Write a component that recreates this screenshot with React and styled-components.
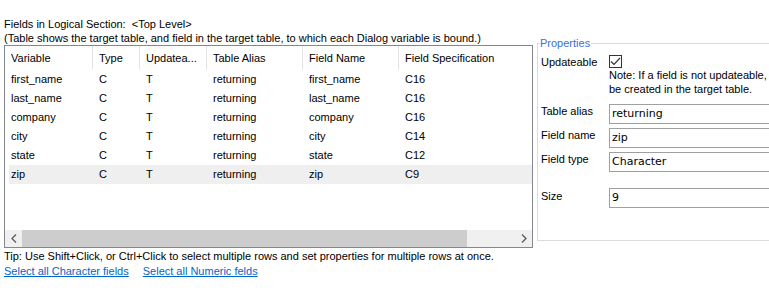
import styled, { createGlobalStyle } from "styled-components";

const GlobalStyle = createGlobalStyle`
  html, body {
    margin: 0;
    padding: 0;
    background: #ffffff;
    overflow: hidden;
  }
  body {
    font-family: "Liberation Sans", Arial, sans-serif;
    font-size: 11px;
    color: #000000;
  }
`;

const Page = styled.div`
  width: 769px;
  height: 292px;
  display: flex;
  overflow: hidden;
`;

const LeftPane = styled.div`
  width: 529px;
  padding: 17px 0 0 4px;
  flex: none;
`;

const Line = styled.div`
  line-height: 14px;
  white-space: nowrap;
`;

const TableBox = styled.div`
  width: 527px;
  height: 201px;
  border: 1px solid #828790;
  display: flex;
  flex-direction: column;
  overflow: hidden;
`;

const Grid = styled.div`
  flex: 1;
  overflow: hidden;
`;

const HeaderRow = styled.div`
  display: grid;
  grid-template-columns: 88px 47px 67px 96px 96px 160px;
  height: 24px;
`;

const HeaderCell = styled.div`
  padding-left: 6px;
  line-height: 24px;
  border-right: 1px solid #e5e5e5;
  white-space: nowrap;
  overflow: hidden;
`;

const Row = styled.div`
  display: grid;
  grid-template-columns: 84px 47px 67px 96px 96px 160px;
  height: 19px;
  line-height: 19px;
  margin-left: 4px;
  background: ${(p) => (p.$selected ? "#efefef" : "transparent")};
`;

const Cell = styled.div`
  padding-left: ${(p) => (p.$first ? 2 : 6)}px;
  white-space: nowrap;
`;

const ScrollBar = styled.div`
  height: 17px;
  display: flex;
  background: #f0f0f0;
`;

const Arrow = styled.div`
  width: 17px;
  display: flex;
  align-items: center;
  justify-content: center;
`;

const Track = styled.div`
  flex: 1;
  display: flex;
`;

const Thumb = styled.div`
  width: 445px;
  background: #cdcdcd;
`;

const Tip = styled.div`
  margin-top: 1px;
  line-height: 14px;
  white-space: nowrap;
`;

const Links = styled.div`
  display: flex;
  gap: 14px;
  line-height: 16px;
`;

const Link = styled.a`
  color: #0066cc;
  text-decoration: underline;
  cursor: pointer;
`;

const RightPane = styled.div`
  flex: none;
  width: 260px;
  padding: 36px 0 0 4px;
`;

const Group = styled.fieldset`
  margin: 0;
  height: 205px;
  padding: 0 0 0 3px;
  border: 1px solid #dcdcdc;
  border-right: none;
  box-sizing: border-box;
`;

const Legend = styled.legend`
  padding: 0 1px 0 0;
  margin-left: -1px;
  color: #3c6fd6;
  line-height: 14px;
`;

const Form = styled.div`
  display: grid;
  grid-template-columns: 68px 1fr;
  row-gap: 4px;
  align-items: start;
  padding-top: 2px;
`;

const Label = styled.div`
  line-height: 14px;
  padding-top: ${(p) => p.$top || 0}px;
  white-space: nowrap;
`;

const CheckWrap = styled.div`
  display: flex;
  flex-direction: column;
  padding: 3px 0 4px;
`;

const Check = styled.div`
  width: 11px;
  height: 11px;
  border: 1px solid #333333;
  display: flex;
  align-items: center;
  justify-content: center;
`;

const Note = styled.div`
  line-height: 14px;
  white-space: nowrap;
`;

const Input = styled.div`
  height: 18px;
  border: 1px solid #a0a0a0;
  border-right: none;
  font-family: "DejaVu Sans", Tahoma, sans-serif;
  font-size: 11px;
  line-height: 18px;
  padding-left: 2px;
  margin-top: ${(p) => p.$top || 0}px;
`;

const columns = [
  "Variable",
  "Type",
  "Updatea...",
  "Table Alias",
  "Field Name",
  "Field Specification",
];

const rows = [
  ["first_name", "C", "T", "returning", "first_name", "C16"],
  ["last_name", "C", "T", "returning", "last_name", "C16"],
  ["company", "C", "T", "returning", "company", "C16"],
  ["city", "C", "T", "returning", "city", "C14"],
  ["state", "C", "T", "returning", "state", "C12"],
  ["zip", "C", "T", "returning", "zip", "C9"],
];

const App = () => {
  return (
    <Page>
      <GlobalStyle />
      <LeftPane>
        <Line>Fields in Logical Section:&nbsp;&nbsp;&lt;Top Level&gt;</Line>
        <Line>
          (Table shows the target table, and field in the target table, to
          which each Dialog variable is bound.)
        </Line>
        <TableBox>
          <Grid>
            <HeaderRow>
              {columns.map((c) => (
                <HeaderCell key={c}>{c}</HeaderCell>
              ))}
            </HeaderRow>
            {rows.map((r) => (
              <Row key={r[0]} $selected={r[0] === "zip"}>
                {r.map((v, i) => (
                  <Cell key={i} $first={i === 0}>
                    {v}
                  </Cell>
                ))}
              </Row>
            ))}
          </Grid>
          <ScrollBar>
            <Arrow>
              <svg width="6" height="9" viewBox="0 0 6 9">
                <path d="M5 0.5 L1 4.5 L5 8.5" fill="none" stroke="#606060" strokeWidth="1.4" />
              </svg>
            </Arrow>
            <Track>
              <Thumb />
            </Track>
            <Arrow>
              <svg width="6" height="9" viewBox="0 0 6 9">
                <path d="M1 0.5 L5 4.5 L1 8.5" fill="none" stroke="#606060" strokeWidth="1.4" />
              </svg>
            </Arrow>
          </ScrollBar>
        </TableBox>
        <Tip>
          Tip: Use Shift+Click, or Ctrl+Click to select multiple rows and set
          properties for multiple rows at once.
        </Tip>
        <Links>
          <Link>Select all Character fields</Link>
          <Link>Select all Numeric felds</Link>
        </Links>
      </LeftPane>
      <RightPane>
        <Group>
          <Legend>Properties</Legend>
          <Form>
            <Label $top={3}>Updateable</Label>
            <CheckWrap>
              <Check>
                <svg width="11" height="9" viewBox="0 0 11 9">
                  <path d="M1 4.5 L4 7.5 L10 1" fill="none" stroke="#333333" strokeWidth="1.2" />
                </svg>
              </Check>
              <Note>
                Note: If a field is not updateable,
                <br />
                be created in the target table.
              </Note>
            </CheckWrap>
            <Label>Table alias</Label>
            <Input>returning</Input>
            <Label>Field name</Label>
            <Input>zip</Input>
            <Label>Field type</Label>
            <Input>Character</Input>
            <Label $top={13}>Size</Label>
            <Input $top={12}>9</Input>
          </Form>
        </Group>
      </RightPane>
    </Page>
  );
};

export default App;
